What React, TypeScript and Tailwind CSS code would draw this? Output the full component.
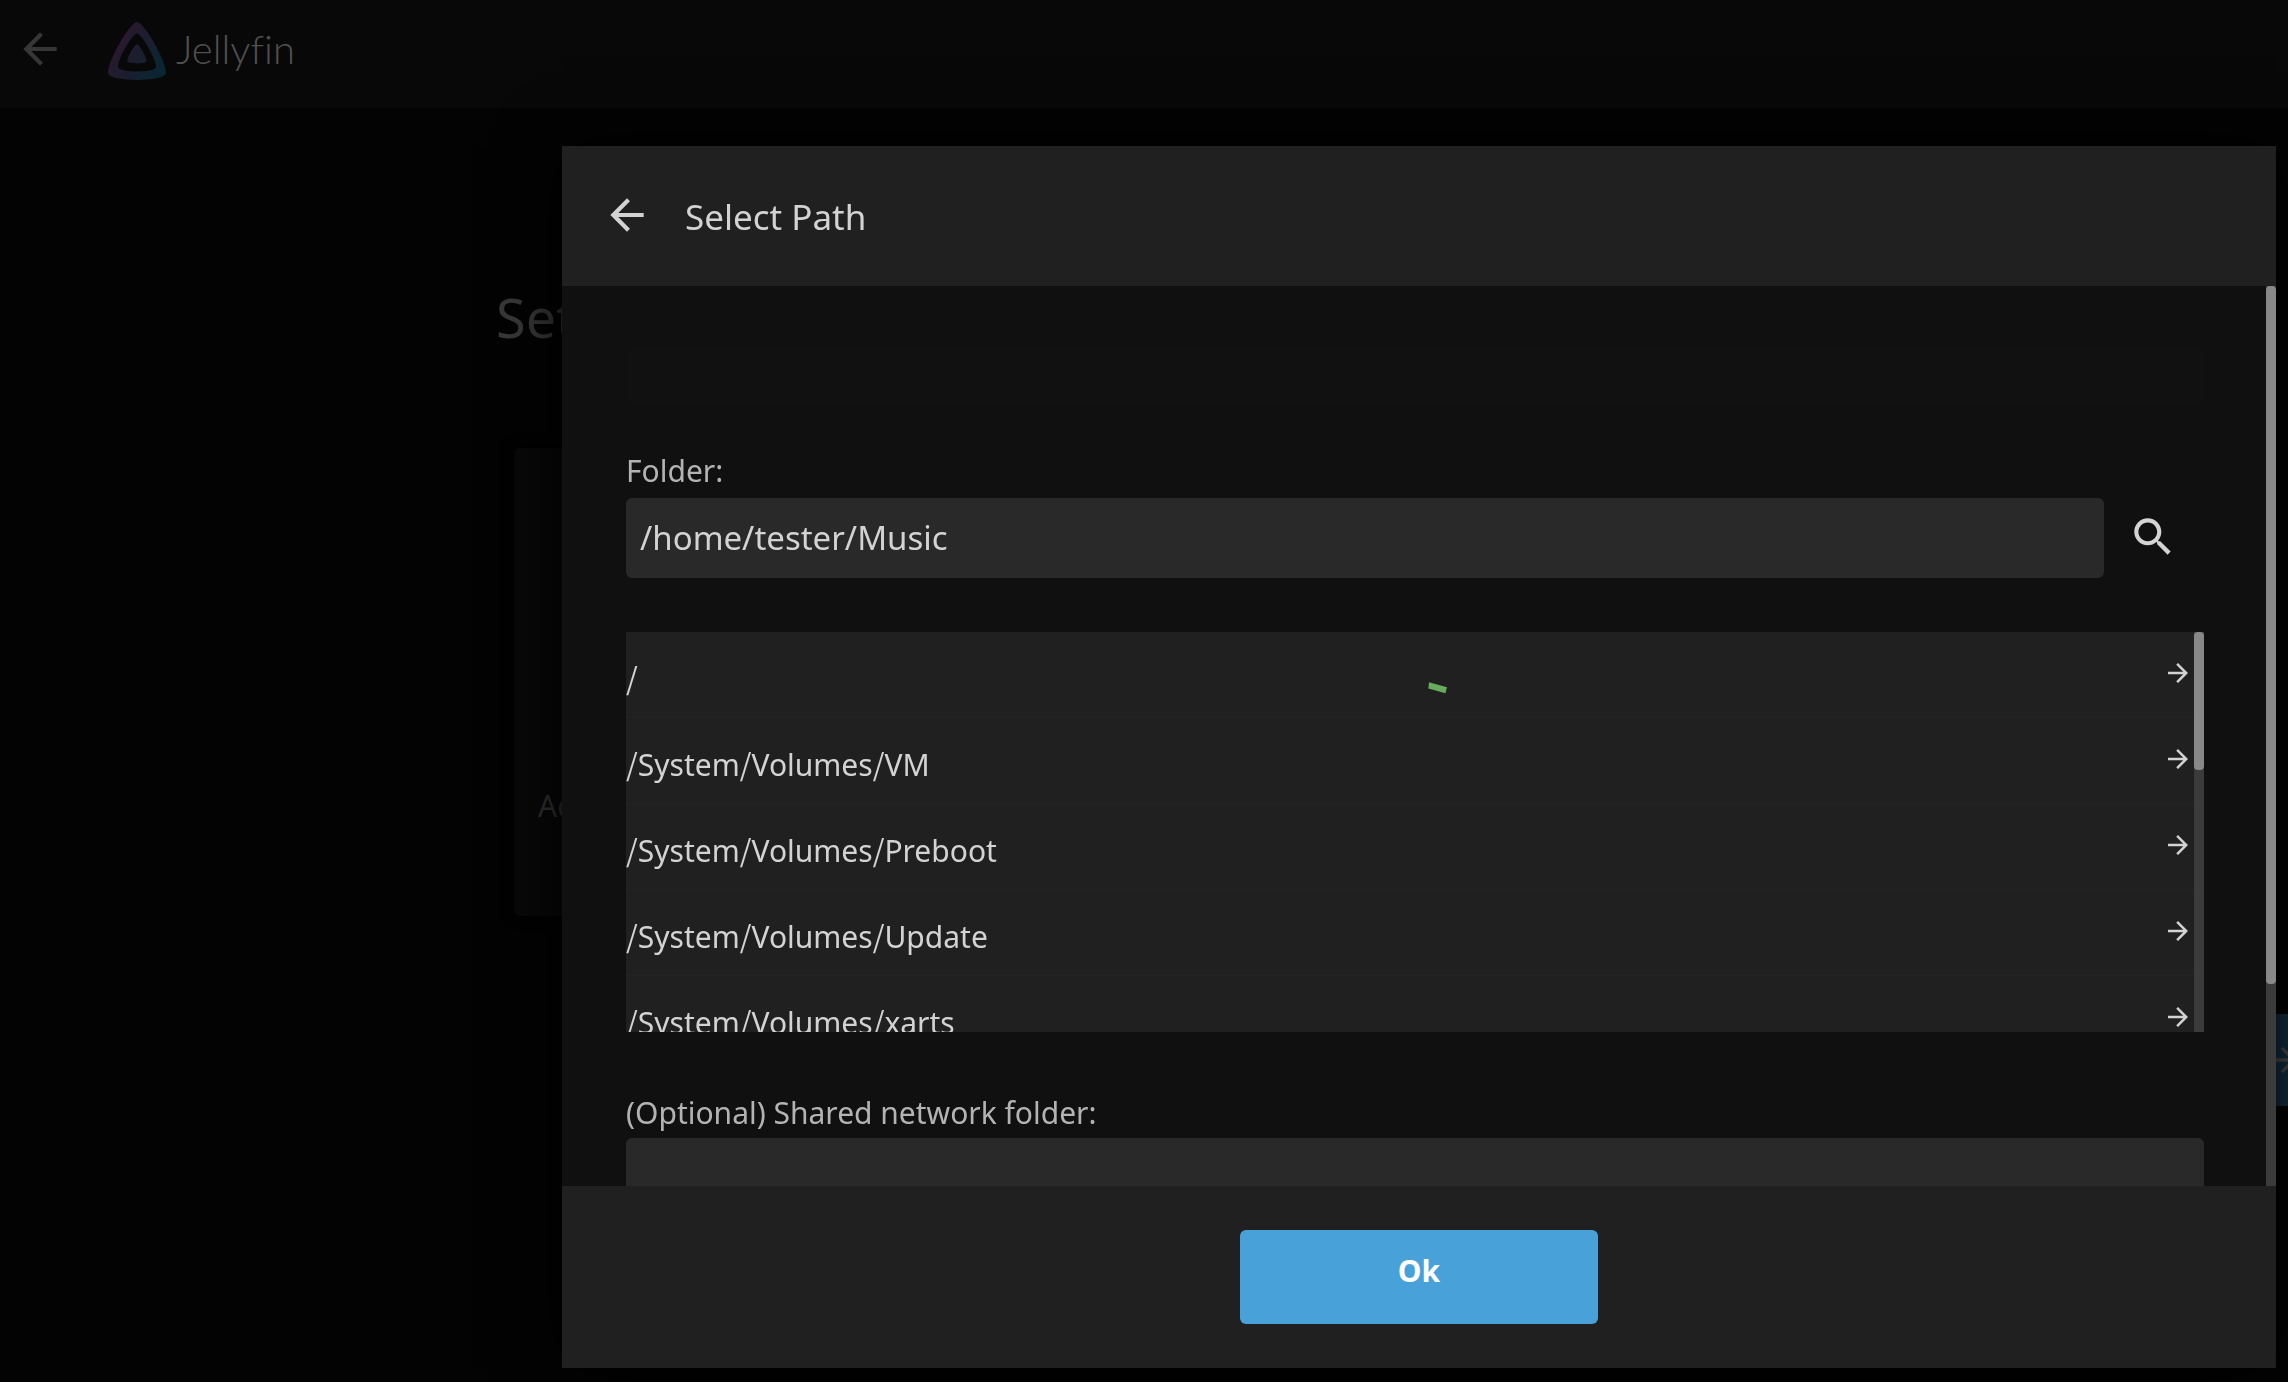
import React from "react";

const folders = [
  "/",
  "/System/Volumes/VM",
  "/System/Volumes/Preboot",
  "/System/Volumes/Update",
  "/System/Volumes/xarts",
];

function ArrowBack({ className }: { className: string }) {
  return (
    <svg viewBox="0 0 24 24" fill="currentColor" className={className} aria-hidden="true">
      <path d="M20 11H7.83l5.59-5.59L12 4l-8 8 8 8 1.41-1.41L7.83 13H20v-2z" />
    </svg>
  );
}

function ArrowForward({ className }: { className: string }) {
  return (
    <svg viewBox="0 0 24 24" fill="currentColor" className={className} aria-hidden="true">
      <path d="M12 4l-1.41 1.41L16.17 11H4v2h12.17l-5.58 5.59L12 20l8-8z" />
    </svg>
  );
}

function SearchIcon({ className }: { className: string }) {
  return (
    <svg viewBox="0 0 24 24" fill="currentColor" className={className} aria-hidden="true">
      <path d="M15.5 14h-.79l-.28-.27C15.41 12.59 16 11.11 16 9.5 16 5.91 13.09 3 9.5 3S3 5.91 3 9.5 5.91 16 9.5 16c1.61 0 3.09-.59 4.23-1.57l.27.28v.79l5 4.99L20.49 19l-4.99-5zm-6 0C7.01 14 5 11.99 5 9.5S7.01 5 9.5 5 14 7.01 14 9.5 11.99 14 9.5 14z" />
    </svg>
  );
}

function Logo() {
  return (
    <svg viewBox="28 23 467 466" className="size-[58px] opacity-20" aria-hidden="true">
      <defs>
        <linearGradient id="brand" x1="110" y1="213" x2="496" y2="436" gradientUnits="userSpaceOnUse">
          <stop offset="0" stopColor="#aa5cc3" />
          <stop offset="1" stopColor="#00a4dc" />
        </linearGradient>
      </defs>
      <path
        fill="url(#brand)"
        d="M261.42,201.62c-20.44,0-86.24,119.29-76.2,139.43s142.48,19.92,152.4,0S281.86,201.63,261.42,201.62Z"
      />
      <path
        fill="url(#brand)"
        d="M261.42,23.3C199.83,23.3,1.57,382.73,31.8,443.43s429.34,60,459.24,0S323,23.3,261.42,23.3ZM411.9,390.76c-19.59,39.33-281.08,39.77-300.9,0S221.1,115.48,261.45,115.48,431.49,351.42,411.9,390.76Z"
      />
    </svg>
  );
}

function Wizard() {
  return (
    <div className="flex h-full flex-col">
      <header className="flex h-[108px] shrink-0 items-start bg-[#080808] pt-[22px] pl-[15px]">
        <button aria-label="Back" className="mt-0.5 text-[#363636]">
          <ArrowBack className="size-[50px]" />
        </button>
        <a href="#home" className="ml-[43px] flex items-center gap-2.5">
          <Logo />
          <span className="pb-1 font-['Lato'] text-[40px] leading-[54px] font-light text-[#505050] [font-variant-ligatures:none]">
            Jellyfin
          </span>
        </a>
      </header>
      <main className="flex flex-col">
        <h1 className="mt-[173px] ml-[496px] text-[54px] leading-[72px] text-[#383838]">
          Set up your media libraries
        </h1>
        <button className="mt-[95px] ml-[514px] flex h-[468px] w-[720px] items-end rounded-md bg-[#080808] pb-[90px] pl-6 text-[30px] leading-10 text-[#333] shadow-[0_0_14px_#000]">
          Add Media Library
        </button>
        <div className="mt-[98px] flex justify-end">
          <button
            aria-label="Next"
            className="-mr-[100px] flex h-[92px] w-[280px] shrink-0 items-center justify-center bg-[#143245] text-[#505050]"
          >
            <ArrowForward className="ml-[70px] size-10" />
          </button>
        </div>
      </main>
    </div>
  );
}

function PathText({ path }: { path: string }) {
  return (
    <span className="pt-2">
      {path.split("/").slice(1).map((part, i) => (
        <React.Fragment key={i}>
          <span className="font-['Noto_Sans_CJK_SC',sans-serif] leading-none">/</span>
          {part}
        </React.Fragment>
      ))}
    </span>
  );
}

function FolderList() {
  return (
    <div className="relative mt-[54px] flex h-[400px] shrink-0 overflow-hidden bg-[#202020]">
      <ul className="min-w-0 flex-1">
        {folders.map((path) => (
          <li key={path}>
            <button className="flex h-[86px] w-full items-center justify-between border-b border-[#232323] pr-px text-left text-[30px] leading-10 text-[#d3d3d3]">
              <PathText path={path} />
              <ArrowForward className="mb-1 size-[30px]" />
            </button>
          </li>
        ))}
      </ul>
      <div className="w-2.5 bg-[#3b3b3b]">
        <div className="h-[138px] rounded-sm bg-[#888]" />
      </div>
      <svg viewBox="0 0 24 16" className="absolute top-12 left-[800px] w-6" aria-label="Loading">
        <path d="M3 2.2 L21 7.2 L19.4 13.2 L2.4 8.4 Z" fill="#66ac5c" />
      </svg>
    </div>
  );
}

function PathDialog() {
  return (
    <div
      role="dialog"
      aria-label="Select Path"
      className="flex min-w-0 flex-1 flex-col bg-[#101010] shadow-[0_0_60px_#000]"
    >
      <header className="flex h-[140px] shrink-0 items-center bg-[#202020] pl-10 text-[#d3d3d3]">
        <button aria-label="Close">
          <ArrowBack className="mb-0.5 size-[50px]" />
        </button>
        <h2 className="ml-[33px] pt-0.5 text-[35px] leading-[46px]">Select Path</h2>
      </header>
      <div className="flex min-h-0 flex-1 overflow-hidden">
        <form className="flex min-w-0 flex-1 flex-col pt-[60px] pr-[62px] pl-16">
          <div className="h-[60px] shrink-0 rounded-md bg-[#111]" />
          <label htmlFor="folder" className="mt-[45px] mb-[7px] text-[30px] leading-10 text-[#b3b3b3]">
            Folder:
          </label>
          <div className="flex items-center">
            <input
              id="folder"
              defaultValue="/home/tester/Music"
              className="h-20 min-w-0 flex-1 rounded-md bg-[#292929] px-3.5 pb-0.5 text-[33px] text-[#d3d3d3]"
            />
            <button type="button" aria-label="Search" className="mx-6 text-[#d3d3d3]">
              <SearchIcon className="mr-0.5 mb-0.5 size-[50px]" />
            </button>
          </div>
          <FolderList />
          <label htmlFor="network" className="mt-[61px] mb-[5px] text-[30px] leading-10 text-[#b3b3b3]">
            (Optional) Shared network folder:
          </label>
          <input
            id="network"
            className="h-20 shrink-0 rounded-md bg-[#292929] px-3.5 text-[33px] text-[#d3d3d3]"
          />
        </form>
        <div className="w-2.5 bg-[#3b3b3b]">
          <div className="h-[698px] rounded-sm bg-[#888]" />
        </div>
      </div>
      <footer className="flex h-[182px] shrink-0 items-center justify-center bg-[#202020]">
        <button className="h-[94px] w-[358px] rounded-md bg-[#48a1d8] pb-3 text-[30px] leading-10 font-bold text-white">
          Ok
        </button>
      </footer>
    </div>
  );
}

export default function App() {
  return (
    <div className="relative h-screen overflow-hidden bg-[#030303] font-['Noto_Sans',sans-serif]">
      <Wizard />
      <div className="fixed inset-0 flex pt-[146px] pr-3 pb-3.5 pl-[562px]">
        <PathDialog />
      </div>
    </div>
  );
}
